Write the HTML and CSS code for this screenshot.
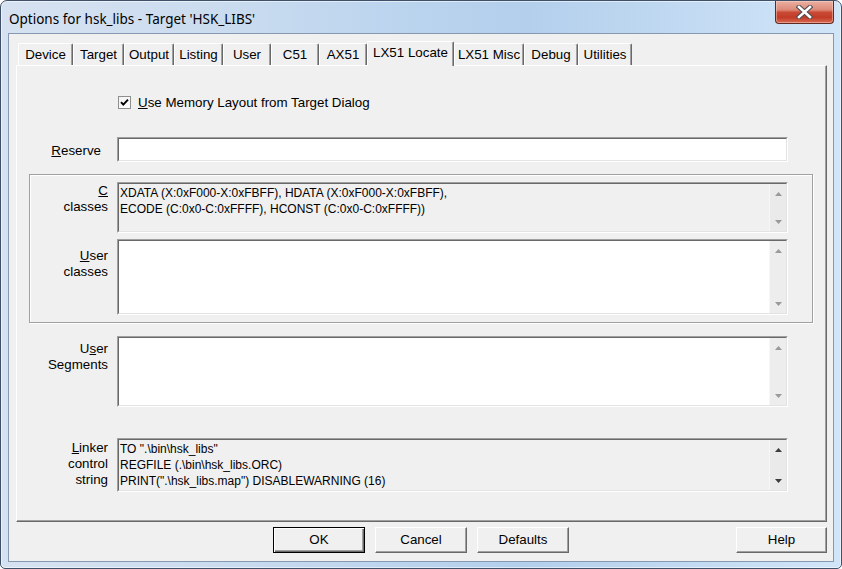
FILE: index.html
```html
<!DOCTYPE html>
<html>
<head>
<meta charset="utf-8">
<link rel="stylesheet" href="styles.css">
</head>
<body>
<div class="window">
  <div class="titlebar">
    <span class="title">Options for hsk_libs - Target 'HSK_LIBS'</span>
    <div class="close">
      <svg width="17" height="14" viewBox="0 0 17 14">
        <path d="M3 2 L14 12 M14 2 L3 12" stroke="#4b4b55" stroke-width="4.6" stroke-linecap="square"/>
        <path d="M3 2 L14 12 M14 2 L3 12" stroke="#ffffff" stroke-width="2.6" stroke-linecap="square"/>
      </svg>
    </div>
  </div>
  <div class="client">
    <div class="tabs">
      <div class="tab t-device">Device</div>
      <div class="tab t-target">Target</div>
      <div class="tab t-output">Output</div>
      <div class="tab t-listing">Listing</div>
      <div class="tab t-user">User</div>
      <div class="tab t-c51">C51</div>
      <div class="tab t-ax51">AX51</div>
      <div class="tab t-locate active">LX51 Locate</div>
      <div class="tab t-misc">LX51 Misc</div>
      <div class="tab t-debug">Debug</div>
      <div class="tab t-util">Utilities</div>
    </div>
    <div class="panel">
      <div class="check-row">
        <div class="checkbox">
          <svg width="11" height="11" viewBox="0 0 11 11">
            <path d="M2 5.2 L4.3 7.6 L9 2.6" fill="none" stroke="#000" stroke-width="1.9"/>
          </svg>
        </div>
        <span class="check-label"><u>U</u>se Memory Layout from Target Dialog</span>
      </div>

      <div class="row reserve-row">
        <div class="lbl lbl-reserve"><u>R</u>eserve</div>
        <div class="field f-reserve"><div class="field-in white"></div></div>
      </div>

      <div class="group">
        <div class="row">
          <div class="lbl lbl-group"><u>C</u><br>classes</div>
          <div class="field f-cclasses">
            <div class="field-in gray">
              <div class="ftext">XDATA (X:0xF000-X:0xFBFF), HDATA (X:0xF000-X:0xFBFF),<br>ECODE (C:0x0-C:0xFFFF), HCONST (C:0x0-C:0xFFFF))</div>
              <div class="sbar">
                <svg class="arr" width="7" height="4" viewBox="0 0 7 4"><polygon points="3.5,0 7,4 0,4" fill="#9a9a9a"/></svg>
                <svg class="arr" width="7" height="4" viewBox="0 0 7 4"><polygon points="0,0 7,0 3.5,4" fill="#9a9a9a"/></svg>
              </div>
            </div>
          </div>
        </div>
        <div class="row uclasses-row">
          <div class="lbl lbl-group lbl-uclasses"><u>U</u>ser<br>classes</div>
          <div class="field f-uclasses">
            <div class="field-in white">
              <div class="ftext"></div>
              <div class="sbar">
                <svg class="arr" width="7" height="4" viewBox="0 0 7 4"><polygon points="3.5,0 7,4 0,4" fill="#9a9a9a"/></svg>
                <svg class="arr" width="7" height="4" viewBox="0 0 7 4"><polygon points="0,0 7,0 3.5,4" fill="#9a9a9a"/></svg>
              </div>
            </div>
          </div>
        </div>
      </div>

      <div class="row seg-row">
        <div class="lbl lbl-seg">U<u>s</u>er<br>Segments</div>
        <div class="field f-seg">
          <div class="field-in white">
            <div class="ftext"></div>
            <div class="sbar">
              <svg class="arr" width="7" height="4" viewBox="0 0 7 4"><polygon points="3.5,0 7,4 0,4" fill="#9a9a9a"/></svg>
              <svg class="arr" width="7" height="4" viewBox="0 0 7 4"><polygon points="0,0 7,0 3.5,4" fill="#9a9a9a"/></svg>
            </div>
          </div>
        </div>
      </div>

      <div class="row linker-row">
        <div class="lbl lbl-linker"><u>L</u>inker<br>control<br>string</div>
        <div class="field f-linker">
          <div class="field-in gray">
            <div class="ftext">TO ".\bin\hsk_libs"<br>REGFILE (.\bin\hsk_libs.ORC)<br>PRINT(".\hsk_libs.map") DISABLEWARNING (16)</div>
            <div class="sbar">
              <svg class="arr" width="7" height="4" viewBox="0 0 7 4"><polygon points="3.5,0 7,4 0,4" fill="#3c3c3c"/></svg>
              <svg class="arr" width="7" height="4" viewBox="0 0 7 4"><polygon points="0,0 7,0 3.5,4" fill="#3c3c3c"/></svg>
            </div>
          </div>
        </div>
      </div>
    </div>
    <div class="buttons">
      <div class="btn default">OK</div>
      <div class="btn">Cancel</div>
      <div class="btn">Defaults</div>
      <div class="btn help">Help</div>
    </div>
  </div>
</div>
</body>
</html>
```
FILE: styles.css
```css
* { box-sizing: border-box; }
body {
  margin: 0;
  background: #ffffff;
  font-family: "Liberation Sans", Arial, sans-serif;
  font-size: 13.33px;
  color: #000;
}
u { text-decoration: underline; text-underline-offset: 1px; }

.window {
  width: 842px;
  height: 569px;
  border: 1px solid #3f5069;
  border-radius: 7px 7px 5px 5px;
  background: linear-gradient(90deg, #d6e2f1 0%, #cbdcef 25%, #bdd5ee 45%, #b3cfec 62%, #c2daf2 82%, #d1e5f8 100%);
  box-shadow: inset 0 0 0 1px rgba(255,255,255,0.55);
  display: flex;
  flex-direction: column;
  overflow: hidden;
}

.titlebar {
  height: 32px;
  display: flex;
  align-items: flex-start;
  padding-left: 8px;
}
.title {
  font-family: "Noto Sans", "Liberation Sans", sans-serif;
  font-size: 13.5px;
  line-height: 18px;
  margin-top: 9px;
  color: #000;
}
.close {
  margin-left: auto;
  margin-right: 7px;
  width: 59px;
  height: 23px;
  border: 1px solid #5e2a22;
  border-top: none;
  border-radius: 0 0 4px 4px;
  background: linear-gradient(#ebb0a2 0%, #dc8a78 40%, #c94a34 52%, #c23c28 75%, #d86b52 100%);
  box-shadow: inset 0 0 0 1px rgba(255,220,210,0.45);
  display: flex;
  align-items: center;
  justify-content: center;
}

.client {
  height: 529px;
  margin: 0 7px;
  border: 1px solid #8799b1;
  background: #f0f0f0;
  display: flex;
  flex-direction: column;
  padding: 7px 6px 0 7px;
}

/* tabs */
.tabs {
  display: flex;
  height: 25px;
  margin-bottom: -1px;
  padding-left: 2px;
  position: relative;
  z-index: 1;
}
.tab {
  margin-top: 2px;
  height: 22px;
  border-top: 1px solid #ffffff;
  border-left: 1px solid #ffffff;
  border-right: 1px solid #696969;
  border-radius: 2px 2px 0 0;
  box-shadow: inset -1px 0 0 #a0a0a0;
  background: #f0f0f0;
  text-align: center;
  line-height: 22px;
  white-space: nowrap;
}
.tab.active {
  margin-top: 0;
  height: 25px;
  line-height: 22px;
}
.t-device { width: 55px; }
.t-target { width: 51px; }
.t-output { width: 50px; }
.t-listing { width: 49px; }
.t-user { width: 48px; }
.t-c51 { width: 48px; }
.t-ax51 { width: 48px; }
.t-locate { width: 87px; }
.t-misc { width: 70px; }
.t-debug { width: 54px; }
.t-util { width: 54px; }

/* panel */
.panel {
  width: 811px;
  height: 457px;
  border-top: 1px solid #ffffff;
  border-left: 1px solid #ffffff;
  border-right: 1px solid #696969;
  border-bottom: 1px solid #696969;
  box-shadow: inset -1px -1px 0 #a0a0a0;
  padding-top: 30px;
}

.check-row {
  display: flex;
  align-items: center;
  margin-left: 101px;
  height: 13px;
}
.checkbox {
  width: 13px;
  height: 13px;
  border: 1px solid #8e8f8f;
  background: linear-gradient(135deg, #f2f2f2, #ffffff);
  display: flex;
  align-items: center;
  justify-content: center;
}
.check-label {
  margin-left: 7px;
  line-height: 16px;
  padding-top: 1px;
}

.row {
  display: flex;
  align-items: flex-start;
}
.lbl {
  width: 91px;
  margin-right: 9px;
  text-align: right;
  line-height: 16px;
  padding-top: 1px;
  flex-shrink: 0;
}
.reserve-row { margin-top: 28px; align-items: center; }
.lbl-reserve { padding-right: 7px; padding-top: 2px; }
.lbl-group { width: 78px; }
.lbl-uclasses { margin-top: 8px; }
.lbl-seg { margin-top: 4px; }
.lbl-linker { margin-top: 1px; }

.field {
  width: 671px;
  border: 1px solid;
  border-color: #a0a0a0 #ffffff #ffffff #a0a0a0;
  flex-shrink: 0;
}
.field-in {
  height: 100%;
  border: 1px solid;
  border-color: #696969 #e3e3e3 #e3e3e3 #696969;
  display: flex;
}
.field-in.white { background: #ffffff; }
.field-in.gray { background: #f0f0f0; }
.ftext {
  flex: 1;
  font-size: 12px;
  line-height: 16px;
  padding-left: 1px;
  padding-top: 1px;
  white-space: nowrap;
}
.sbar {
  width: 17px;
  background: #ededed;
  border-left: 1px solid #f7f7f7;
  display: flex;
  flex-direction: column;
  align-items: center;
  justify-content: space-between;
  padding: 8px 0 7px;
}
.field-in.gray .sbar { background: #eaeaea; }
.arr { display: block; }

.f-reserve { height: 25px; }
.f-cclasses { height: 51px; }
.f-uclasses { height: 76px; }
.f-seg { height: 71px; }
.f-linker { height: 54px; }

.group {
  margin-top: 12px;
  margin-left: 12px;
  width: 784px;
  height: 149px;
  border: 1px solid #a0a0a0;
  box-shadow: inset 1px 1px 0 #ffffff, 1px 1px 0 #ffffff;
  padding-top: 7px;
}
.uclasses-row { margin-top: 6px; }
.seg-row { margin-top: 13px; }
.linker-row { margin-top: 31px; }

/* buttons */
.buttons {
  display: flex;
  gap: 10px;
  margin-top: 5px;
  padding-left: 257px;
  padding-right: 0;
}
.btn {
  width: 92px;
  height: 26px;
  border: 1px solid;
  border-color: #ffffff #696969 #696969 #ffffff;
  box-shadow: inset -1px -1px 0 #a0a0a0;
  background: #f0f0f0;
  text-align: center;
  line-height: 24px;
}
.btn.default {
  border: 1px solid #000;
  box-shadow: inset 1px 1px 0 #ffffff, inset -1px -1px 0 #696969, inset -2px -2px 0 #a0a0a0;
}
.btn.help {
  margin-left: auto;
  width: 91px;
}
```
